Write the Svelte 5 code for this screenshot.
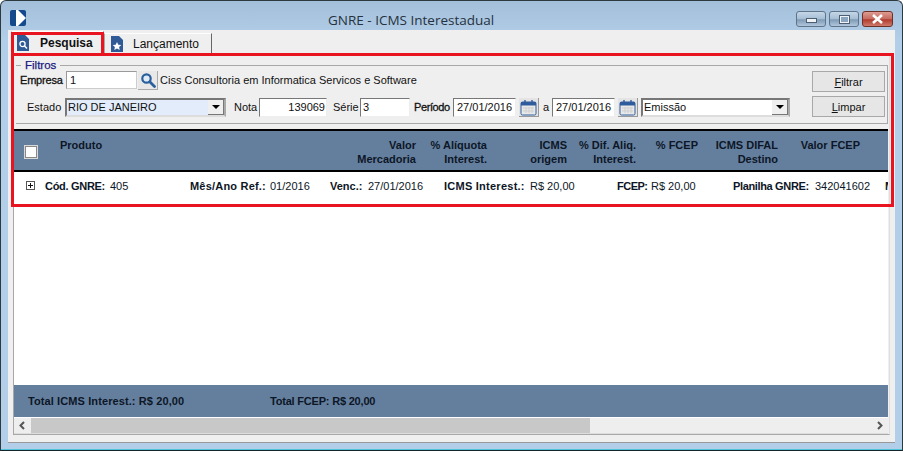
<script>
  const headerCols = [
    { lines: ['Valor', 'Mercadoria'], width: 126 },
    { lines: ['% Alíquota', 'Interest.'], width: 71 },
    { lines: ['ICMS', 'origem'], width: 80 },
    { lines: ['% Dif. Aliq.', 'Interest.'], width: 69 },
    { lines: ['% FCEP'], width: 62 },
    { lines: ['ICMS DIFAL', 'Destino'], width: 80 },
    { lines: ['Valor FCEP'], width: 82 }
  ];

  const rowCells = [
    { label: 'Cód. GNRE:', value: '405', width: 145, labelWidth: 65, spacing: -0.3 },
    { label: 'Mês/Ano Ref.:', value: '01/2016', width: 140, labelWidth: 80, spacing: 0.2 },
    { label: 'Venc.:', value: '27/01/2016', width: 114, labelWidth: 38, spacing: 0 },
    { label: 'ICMS Interest.:', value: 'R$ 20,00', width: 173, labelWidth: 86, spacing: 0.25 },
    { label: 'FCEP:', value: 'R$ 20,00', width: 116, labelWidth: 34, spacing: -0.5 },
    { label: 'Planilha GNRE:', value: '342041602', width: 152, labelWidth: 82, spacing: -0.35 },
    { label: 'M', value: '', width: 20, labelWidth: 12, spacing: 0 }
  ];
</script>

{#snippet lupa()}
  <svg width="16" height="16" viewBox="0 0 16 16">
    <circle cx="6.5" cy="6.5" r="4.2" fill="#dfeaf5" stroke="#2a5f9e" stroke-width="2.2" />
    <path d="M10 10l4.5 4.5" stroke="#2a5f9e" stroke-width="2.8" stroke-linecap="round" />
  </svg>
{/snippet}

{#snippet calendario()}
  <svg width="17" height="17" viewBox="0 0 17 17">
    <rect x="1" y="3" width="15" height="13" rx="1.5" fill="#e8e8e8" stroke="#2f5c9c" />
    <rect x="1" y="3" width="15" height="3.5" fill="#2f5c9c" />
    <path d="M5 1v4M12 1v4" stroke="#2f5c9c" stroke-width="1.4" />
    <path d="M3 9h11M3 12h11M6 8v6M9 8v6M12 8v6" stroke="#cfcfcf" />
  </svg>
{/snippet}

{#snippet seta()}
  <span class="combo-btn"><i></i></span>
{/snippet}

<div class="window">
  <header class="titlebar">
    <svg class="app-icon" width="16" height="16" viewBox="0 0 16 16">
      <rect width="16" height="16" rx="2" fill="#14498c" />
      <path d="M6 0h2l8 8-8 8H6z" fill="#fff" />
    </svg>
    <span class="title">GNRE - ICMS Interestadual</span>
    <div class="controls">
      <span class="ctl"><i class="min"></i></span>
      <span class="ctl"><i class="max"></i></span>
      <span class="ctl close">
        <svg width="13" height="10" viewBox="0 0 13 10">
          <path d="M2 1l9 8M11 1l-9 8" stroke="#fff" stroke-width="2.6" />
        </svg>
      </span>
    </div>
  </header>

  <div class="client">
    <div class="tabs">
      <div class="tab active">
        <svg width="12" height="16" viewBox="0 0 12 16">
          <path d="M0 0h8l4 4v12H0z" fill="#2f5a96" />
          <circle cx="5.500" cy="9" r="2.600" fill="none" stroke="#fff" stroke-width="1.300" />
          <path d="M7.500 11l2.500 2.500" stroke="#fff" stroke-width="1.400" />
        </svg>
        <span>Pesquisa</span>
      </div>
      <div class="tab">
        <svg width="12" height="16" viewBox="0 0 12 16">
          <path d="M0 0h8l4 4v12H0z" fill="#2f5a96" />
          <path d="M6 6l1.300 2.700 3 .4-2.200 2 .6 3L6 12.600l-2.700 1.500.6-3-2.200-2 3-.4z" fill="#fff" />
        </svg>
        <span>Lançamento</span>
      </div>
    </div>

    <div class="panel">
      <fieldset class="filtros">
        <legend>Filtros</legend>
        <div class="filter-body">
          <div class="filter-rows">
            <div class="row-a">
              <label class="strong lb-empresa" for="empresa">Empresa</label>
              <input id="empresa" class="inp w-empresa" value="1" />
              <span class="lookup">{@render lupa()}</span>
              <span class="razao">Ciss Consultoria em Informatica Servicos e Software</span>
            </div>
            <div class="row-b">
              <span class="lb lb-estado">Estado</span>
              <div class="combo w-estado sel"><span>RIO DE JANEIRO</span>{@render seta()}</div>
              <span class="lb lb-nota">Nota</span>
              <input class="inp w-nota right" value="139069" />
              <span class="lb lb-serie">Série</span>
              <input class="inp w-serie" value="3" />
              <span class="lb strong lb-periodo">Período</span>
              <input class="inp w-data" value="27/01/2016" />
              <span class="cal">{@render calendario()}</span>
              <span class="lb lb-a">a</span>
              <input class="inp w-data" value="27/01/2016" />
              <span class="cal">{@render calendario()}</span>
              <div class="combo w-tipo"><span>Emissão</span>{@render seta()}</div>
            </div>
          </div>
          <div class="actions">
            <button type="button"><u>F</u>iltrar</button>
            <button type="button"><u>L</u>impar</button>
          </div>
        </div>
      </fieldset>

      <div class="grid">
        <div class="grid-head">
          <span class="check"></span>
          <span class="produto">Produto</span>
          {#each headerCols as col}
            <div class="hcol" style="width: {col.width}px">
              {#each col.lines as line}<div>{line}</div>{/each}
            </div>
          {/each}
        </div>
        <div class="grid-row">
          <span class="expand"></span>
          {#each rowCells as cell}
            <div class="cell" style="width: {cell.width}px"><b style="width: {cell.labelWidth}px; letter-spacing: {cell.spacing}px">{cell.label}</b>{#if cell.value}<span>{cell.value}</span>{/if}</div>
          {/each}
        </div>
        <div class="grid-space"></div>
        <div class="grid-foot">
          <span class="total-a">Total ICMS Interest.: R$ 20,00</span>
          <span class="total-b">Total FCEP: R$ 20,00</span>
        </div>
        <div class="scroll">
          <svg width="17" height="15" viewBox="0 0 17 15"><path d="M10 4L6.500 7.500 10 11" fill="none" stroke="#555" stroke-width="2" /></svg>
          <div class="thumb"></div>
          <svg class="arrow-r" width="17" height="15" viewBox="0 0 17 15"><path d="M7 4l3.500 3.500L7 11" fill="none" stroke="#555" stroke-width="2" /></svg>
        </div>
      </div>
    </div>

    <!-- marcacoes vermelhas por cima da tela -->
    <div class="mark mark-tab"></div>
    <div class="mark mark-panel"></div>
  </div>
</div>

<style>
  :global(body) {
    margin: 0;
    background: #fff;
  }
  .window {
    box-sizing: border-box;
    width: 903px;
    height: 451px;
    display: flex;
    flex-direction: column;
    padding: 0 7px 7px;
    border: 1px solid #2c3a40;
    border-bottom-color: #12262c;
    border-radius: 6px 6px 0 0;
    background: linear-gradient(#a3bfda, #b3cee8 40px);
    box-shadow: inset 0 -1px 0 #4fc3d8;
    font: 11px "Liberation Sans", Arial, sans-serif;
    color: #111;
    overflow: hidden;
  }
  .titlebar {
    height: 29px;
    flex: none;
    position: relative;
    display: flex;
    align-items: center;
  }
  .app-icon {
    margin: 0 0 0 2px;
    position: relative;
    top: 2px;
  }
  .title {
    position: absolute;
    left: 320px;
    top: 11px;
    font: 13.5px "Open Sans", sans-serif;
    line-height: 16px;
    color: #26323e;
  }
  .controls {
    margin-left: auto;
    margin-right: 2px;
    margin-top: 7px;
    display: flex;
    gap: 3px;
  }
  .ctl {
    box-sizing: border-box;
    width: 30px;
    height: 16px;
    display: flex;
    align-items: center;
    justify-content: center;
    border: 1px solid #5f7488;
    border-radius: 3px;
    background: linear-gradient(#c5d7e8, #a5bdd4 50%, #7f9ab5 55%, #b0c6dc);
  }
  .ctl.close {
    width: 31px;
    border-color: #6f3028;
    background: linear-gradient(#dc9c92, #c66a5e 50%, #b03c2f 55%, #cf7a6c);
  }
  .min {
    display: block;
    width: 9px;
    height: 3px;
    margin-top: 3px;
    background: #eef3f8;
    border: 1px solid #4c5e70;
  }
  .max {
    display: block;
    box-sizing: border-box;
    width: 11px;
    height: 9px;
    border: 2px solid #eef3f8;
    outline: 1px solid #4c5e70;
    outline-offset: -1px;
    background: #8aa5bf;
  }
  .client {
    flex: 1;
    min-height: 0;
    position: relative;
    display: flex;
    flex-direction: column;
    background: #efefef;
    border-bottom: 1px solid #999;
    padding: 0 5px 7px 5px;
  }
  .tabs {
    height: 24px;
    flex: none;
    display: flex;
    align-items: flex-end;
    position: relative;
    z-index: 1;
    margin: 0 0 -1px -2px;
  }
  .tab {
    box-sizing: border-box;
    height: 21px;
    width: 108px;
    display: flex;
    align-items: center;
    gap: 10px;
    padding: 0 0 0 6px;
    border: 1px solid #a8a8a8;
    border-top-color: #fff;
    border-right-color: #666;
    border-bottom-color: #999;
    background: #efefef;
    font-size: 12px;
  }
  .tab.active {
    width: 93px;
    height: 23px;
    padding-left: 5px;
    gap: 11px;
    border-bottom-color: #efefef;
    font-weight: bold;
  }
  .panel {
    flex: 1;
    min-height: 0;
    display: flex;
    flex-direction: column;
    border: 1px solid #a8a8a8;
    border-top-color: #fff;
    border-right-color: #ddd;
    padding: 0 1px;
  }
  .filtros {
    box-sizing: border-box;
    height: 65px;
    flex: none;
    margin: 5px 0 0 1px;
    padding: 0 2px 0 4px;
    border: 1px solid #a8a8a8;
    border-width: 1px 1px 0 0;
    border-bottom: 1px solid #a8a8a8;
    min-width: 0;
  }
  legend {
    margin-left: 1px;
    padding: 0 4px;
    font-size: 11.5px;
    font-weight: normal;
    color: #1a1a80;
    -webkit-text-stroke: 0.25px #1a1a80;
    line-height: 12px;
  }
  .filter-body {
    display: flex;
    justify-content: space-between;
  }
  .filter-rows {
    display: flex;
    flex-direction: column;
    gap: 9px;
  }
  .row-a, .row-b {
    display: flex;
    align-items: center;
  }
  .row-a { height: 18px; }
  .row-b { height: 19px; }
  .lb { margin-bottom: 2px; }
  .strong {
    font-weight: normal;
    -webkit-text-stroke: 0.3px #111;
  }
  .lb-empresa { width: 42px; white-space: nowrap; letter-spacing: -0.2px; }
  .inp {
    box-sizing: border-box;
    height: 100%;
    border: 1px solid #8c8c8c;
    border-color: #777 #eee #eee #777;
    background: #fff;
    font: 11px "Liberation Sans", Arial, sans-serif;
    color: #111;
    padding: 0 2px;
    min-width: 0;
    outline: none;
  }
  .row-b .inp { padding-bottom: 2px; }
  .right { text-align: right; padding-right: 1px; }
  .row-a .inp {
    margin-left: 4px;
    padding-left: 3px;
    border-color: #999 #ccc #ccc #999;
  }
  .w-empresa { width: 71px; }
  .lookup {
    box-sizing: border-box;
    width: 20px;
    height: 19px;
    margin-left: 1px;
    display: flex;
    align-items: center;
    justify-content: center;
    background: #e8e8e8;
    border-right: 1px solid #aaa;
    border-bottom: 1px solid #aaa;
  }
  .razao { margin-left: 2px; }
  .lb-estado { margin-left: 7px; width: 38px; }
  .combo {
    box-sizing: border-box;
    height: 100%;
    display: flex;
    align-items: center;
    justify-content: space-between;
    border: 2px solid #777;
    border-right-color: #aaa;
    border-bottom-color: #ddd;
    background: #fff;
    padding-left: 1px;
  }
  .combo > span:first-child { margin-bottom: 2px; }
  .combo.sel { background: #e2ecfa; }
  .w-estado { width: 161px; }
  .w-tipo { width: 149px; margin-left: 3px; }
  .combo-btn {
    box-sizing: border-box;
    width: 16px;
    height: 15px;
    display: flex;
    align-items: center;
    justify-content: center;
    background: #efefef;
    border-right: 1px solid #777;
    border-bottom: 1px solid #777;
  }
  .combo-btn i {
    border: 4px solid transparent;
    border-top: 4px solid #000;
    border-bottom: 0;
  }
  .lb-nota { margin-left: 8px; width: 25px; }
  .w-nota { width: 68px; }
  .lb-serie { margin-left: 6px; width: 27px; }
  .w-serie { width: 50px; }
  .lb-periodo { margin-left: 4px; width: 39px; letter-spacing: -0.4px; }
  .w-data { width: 63px; text-align: center; }
  .cal {
    box-sizing: border-box;
    width: 20px;
    height: 19px;
    margin-left: 3px;
    display: flex;
    align-items: center;
    justify-content: center;
    background: #e4e4e4;
    border-right: 1px solid #999;
    border-bottom: 1px solid #999;
  }
  .lb-a { margin: 0 3px 2px 4px; width: 6px; }
  .actions {
    display: flex;
    flex-direction: column;
    gap: 4px;
  }
  .actions button {
    box-sizing: border-box;
    width: 73px;
    height: 21px;
    border: 1px solid #a8a8a8;
    background: #e6e6e6;
    font: 11px "Liberation Sans", Arial, sans-serif;
    color: #111;
    padding: 0;
  }
  .grid {
    flex: 1;
    min-height: 0;
    display: flex;
    flex-direction: column;
    margin: 5px 0 0 -1px;
    background: #fff;
    overflow: hidden;
  }
  .grid-head {
    box-sizing: border-box;
    height: 43px;
    flex: none;
    display: flex;
    background: #647f9e;
    border-top: 2px solid #000;
    border-bottom: 2px solid #000;
    font-weight: bold;
    color: #0d1626;
    line-height: 14px;
    padding-top: 7px;
  }
  .check {
    box-sizing: border-box;
    width: 12px;
    height: 12px;
    margin: 8px 23px 0 11px;
    background: #fff;
    border: 1px solid #888;
    box-shadow: 0 0 0 1px #d8d8d8;
  }
  .produto { width: 230px; }
  .hcol {
    flex: none;
    text-align: right;
    white-space: nowrap;
  }
  .grid-row {
    height: 30px;
    flex: none;
    display: flex;
    align-items: center;
    padding-bottom: 3px;
    box-sizing: border-box;
    overflow: hidden;
    color: #0d1626;
  }
  .expand {
    box-sizing: border-box;
    flex: none;
    width: 9px;
    height: 9px;
    margin: 0 10px 0 12px;
    border: 1px solid #555;
    background:
      linear-gradient(#111, #111) center / 5px 1px no-repeat,
      linear-gradient(#111, #111) center / 1px 5px no-repeat,
      #fff;
  }
  .cell {
    flex: none;
    white-space: nowrap;
  }
  .cell b {
    display: inline-block;
  }
  .grid-space { flex: 1; }
  .grid-foot {
    height: 33px;
    flex: none;
    display: flex;
    align-items: center;
    padding-left: 14px;
    background: #647f9e;
    font-weight: bold;
    color: #0d1626;
    box-sizing: border-box;
    border-bottom: 1px solid #fff;
  }
  .total-a { width: 242px; letter-spacing: 0.1px; }
  .total-b { letter-spacing: -0.2px; }
  .scroll {
    height: 15px;
    flex: none;
    display: flex;
    align-items: center;
    background: #eee;
    border-bottom: 1px solid #ddd;
    box-sizing: content-box;
  }
  .thumb {
    width: 559px;
    height: 100%;
    background: #c8c8c8;
  }
  .arrow-r { margin-left: auto; }
  .mark {
    position: absolute;
    box-sizing: border-box;
    border: 3px solid #e8141f;
    pointer-events: none;
    z-index: 5;
  }
  .mark-tab {
    left: 3px;
    top: 2px;
    width: 93px;
    height: 24px;
  }
  .mark-panel {
    left: 3px;
    top: 23px;
    width: 883px;
    height: 154px;
  }
</style>
